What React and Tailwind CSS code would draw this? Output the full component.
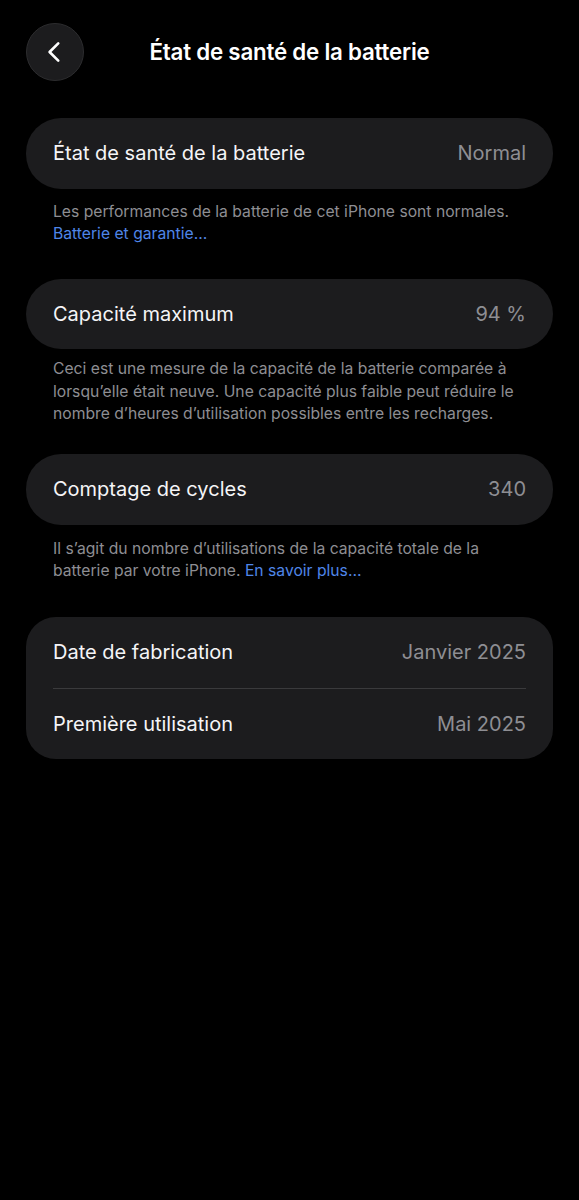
import React from "react";

function Row({ label, value }) {
  return (
    <div className="flex items-center justify-between h-[70.5px] px-[27px]">
      <span className="text-[20px] text-[#f5f5f7]">{label}</span>
      <span className="text-[20px] text-[#8e8e93]">{value}</span>
    </div>
  );
}

export default function App() {
  return (
    <div
      className="min-h-[1200px] w-[579px] bg-black text-white"
      style={{ fontFamily: "Inter, 'Noto Sans', sans-serif" }}
    >
      <div className="relative flex items-center justify-center h-[104px]">
        <button className="absolute left-[26px] top-[23px] w-[58px] h-[58px] rounded-full bg-[#1c1c1e] border border-[#2c2c2e] flex items-center justify-center">
          <svg width="26" height="26" viewBox="0 0 24 24" fill="none" stroke="white" strokeWidth="2.4" strokeLinecap="round" strokeLinejoin="round">
            <path d="M15 4 L7 12 L15 20" />
          </svg>
        </button>
        <h1 className="text-[22.3px] font-semibold tracking-[-0.2px]">État de santé de la batterie</h1>
      </div>

      <div className="px-[26px] pt-[14px] flex flex-col">
        <div className="rounded-[35px] bg-[#1c1c1e]">
          <Row label="État de santé de la batterie" value="Normal" />
        </div>
        <p className="px-[27px] pt-[12px] text-[15.7px] leading-[22.5px] text-[#8e8e93]">
          Les performances de la batterie de cet iPhone sont normales.
          <br />
          <span className="text-[#4f86e8]">Batterie et garantie…</span>
        </p>

        <div className="mt-[33px] rounded-[35px] bg-[#1c1c1e]">
          <Row label="Capacité maximum" value="94 %" />
        </div>
        <p className="px-[27px] pt-[9px] text-[15.7px] leading-[22.7px] text-[#8e8e93]">
          Ceci est une mesure de la capacité de la batterie comparée à lorsqu’elle était neuve. Une capacité plus faible peut réduire le nombre d’heures d’utilisation possibles entre les recharges.
        </p>

        <div className="mt-[28px] rounded-[35px] bg-[#1c1c1e]">
          <Row label="Comptage de cycles" value="340" />
        </div>
        <p className="px-[27px] pt-[13px] text-[15.7px] leading-[22.7px] text-[#8e8e93]">
          Il s’agit du nombre d’utilisations de la capacité totale de la batterie par votre iPhone. <span className="text-[#4f86e8]">En savoir plus…</span>
        </p>

        <div className="mt-[34px] rounded-[30px] bg-[#1c1c1e]">
          <Row label="Date de fabrication" value="Janvier 2025" />
          <div className="mx-[27px] h-px bg-[#3a3a3c]" />
          <Row label="Première utilisation" value="Mai 2025" />
        </div>
      </div>
    </div>
  );
}
